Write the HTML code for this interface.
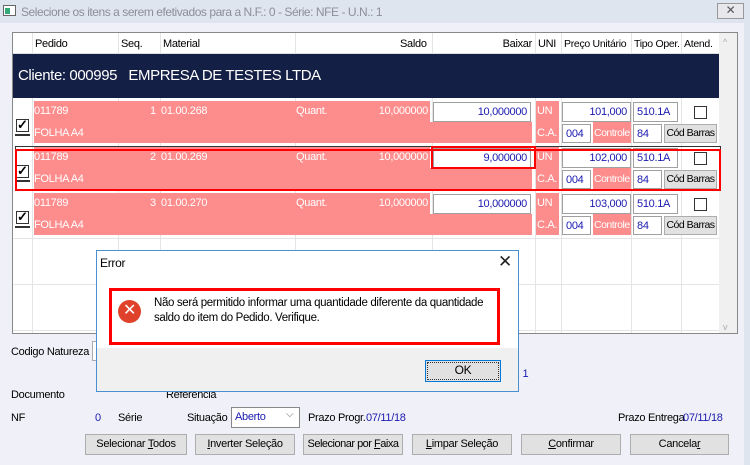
<!DOCTYPE html>
<html><head><meta charset="utf-8"><style>
*{margin:0;padding:0;box-sizing:border-box}
body{width:750px;height:465px;background:#f0f0f8;font-family:"Liberation Sans",sans-serif;font-size:11px;letter-spacing:-0.3px;color:#000;position:relative;overflow:hidden}
div{white-space:nowrap}
.a{position:absolute}
.pk{position:absolute;background:#fd8c8c}
.w{color:#fff}
.in{position:absolute;background:#fff;border:1px solid #a0a0a0;color:#1a1ab0;padding:2px 3px;line-height:14px}
.r{text-align:right}
.btn{position:absolute;background:#e1e1e1;border:1px solid #adadad;text-align:center;line-height:19px;height:21px;overflow:hidden}
.cb{position:absolute;width:13px;height:13px;border:1px solid #333;background:#fff}
.vl{position:absolute;width:1px;background:#e4e4e4}
.hl{position:absolute;height:1px;background:#e4e4e4}
.bl{color:#1a1ab0}
</style></head><body>
<div class="a" style="left:0;top:0;width:750px;height:23px;background:#dfe5ef"></div>
<div class="a" style="left:3px;top:5px;width:13px;height:11px;border:1px solid #666;background:#fff"><div style="position:absolute;left:1px;top:2px;width:5px;height:6px;background:#3a7"></div></div>
<div class="a" style="left:21px;top:5px;font-size:12px;color:#8a8f98;letter-spacing:-0.45px">Selecione os itens a serem efetivados para a N.F.: 0 - Série: NFE - U.N.: 1</div>
<div class="a" style="left:717px;top:3px;width:27px;height:16px;border:1px solid #999;background:#e8e8ec;text-align:center;line-height:13px;color:#555;font-size:12px">✕</div>
<div class="a" style="left:744px;top:23px;width:6px;height:442px;background:#dfe5ef"></div>

<div class="a" style="left:12px;top:32px;width:726px;height:302px;border:1px solid #888;background:#fff"></div>
<div class="a" style="left:719px;top:33px;width:18px;height:300px;background:#f0f0f0"></div>
<div class="a" style="left:723px;top:37px;color:#aaa;font-size:9px">^</div>
<div class="a" style="left:723px;top:322px;color:#aaa;font-size:9px">v</div>
<div class="hl" style="left:13px;top:53px;width:706px;background:#ddd"></div>
<div class="vl" style="left:32px;top:33px;height:300px"></div>
<div class="vl" style="left:118px;top:33px;height:300px"></div>
<div class="vl" style="left:160px;top:33px;height:300px"></div>
<div class="vl" style="left:295px;top:33px;height:300px"></div>
<div class="vl" style="left:432px;top:33px;height:300px"></div>
<div class="vl" style="left:535px;top:33px;height:300px"></div>
<div class="vl" style="left:561px;top:33px;height:300px"></div>
<div class="vl" style="left:631px;top:33px;height:300px"></div>
<div class="vl" style="left:681px;top:33px;height:300px"></div>
<div class="hl" style="left:13px;top:238px;width:706px"></div>
<div class="hl" style="left:13px;top:284px;width:706px"></div>
<div class="hl" style="left:13px;top:330px;width:706px"></div>
<div class="a" style="left:35px;top:38px">Pedido</div>
<div class="a" style="left:121px;top:38px">Seq.</div>
<div class="a" style="left:163px;top:38px">Material</div>
<div class="a" style="left:400px;top:38px">Saldo</div>
<div class="a" style="left:500px;top:38px;width:32px;text-align:right">Baixar</div>
<div class="a" style="left:538px;top:38px">UNI</div>
<div class="a" style="left:564px;top:38px;font-size:10.5px">Preço Unitário</div>
<div class="a" style="left:634px;top:38px;font-size:10.5px">Tipo Oper.</div>
<div class="a" style="left:684px;top:38px;font-size:10.5px">Atend.</div>
<div class="a" style="left:13px;top:54px;width:706px;height:44px;background:#141f45"></div>
<div class="a" style="left:18px;top:67px;color:#fff;font-size:15px;letter-spacing:-0.4px">Cliente: 000995 &nbsp;&nbsp;EMPRESA DE TESTES LTDA</div>

<div id="rows"></div>
<script>
var h='';[[101,'1','268','101,000','10,000000'],[147,'2','269','102,000','9,000000'],[193,'3','270','103,000','10,000000']].forEach(function(r){var y=r[0];
h+='<div class="pk" style="left:34px;top:'+y+'px;width:396px;height:21px"></div>';
h+='<div class="pk" style="left:34px;top:'+(y+21)+'px;width:498px;height:21px"></div>';
h+='<div class="pk" style="left:536px;top:'+y+'px;width:23px;height:21px"></div>';
h+='<div class="pk" style="left:536px;top:'+(y+21)+'px;width:23px;height:21px"></div>';
h+='<div class="pk" style="left:593px;top:'+(y+21)+'px;width:38px;height:21px"></div>';
h+='<div class="a w" style="left:34px;top:'+(y+4)+'px">011789</div>';
h+='<div class="a w" style="left:150px;top:'+(y+4)+'px">'+r[1]+'</div>';
h+='<div class="a w" style="left:161px;top:'+(y+4)+'px">01.00.'+r[2]+'</div>';
h+='<div class="a w" style="left:296px;top:'+(y+4)+'px">Quant.</div>';
h+='<div class="a w" style="left:370px;top:'+(y+4)+'px;width:58px;text-align:right">10,000000</div>';
h+='<div class="a w" style="left:34px;top:'+(y+26)+'px">FOLHA A4</div>';
h+='<div class="a w" style="left:537px;top:'+(y+4)+'px">UN</div>';
h+='<div class="a w" style="left:537px;top:'+(y+26)+'px">C.A.</div>';
h+='<div class="a w" style="left:594px;top:'+(y+26)+'px;font-size:10.5px;letter-spacing:-0.5px">Controle</div>';
h+='<div class="in r" style="left:433px;top:'+(y+1)+'px;width:98px;height:20px">'+r[4]+'</div>';
h+='<div class="in r" style="left:562px;top:'+(y+1)+'px;width:69px;height:20px">'+r[3]+'</div>';
h+='<div class="in" style="left:633px;top:'+(y+1)+'px;width:45px;height:20px">510.1A</div>';
h+='<div class="in" style="left:562px;top:'+(y+23)+'px;width:29px;height:19px">004</div>';
h+='<div class="in" style="left:633px;top:'+(y+23)+'px;width:29px;height:19px">84</div>';
h+='<div class="btn" style="left:664px;top:'+(y+23)+'px;width:53px;height:19px;line-height:17px;font-size:10.5px;letter-spacing:-0.5px">Cód Barras</div>';
h+='<div class="cb" style="left:694px;top:'+(y+5)+'px"></div>';
h+='<div class="cb" style="left:16px;top:'+(y+18)+'px;font-size:13px;line-height:10px;font-weight:bold">✓</div>';
h+='<div class="a" style="left:15px;top:'+(y+33)+'px;width:15px;height:2px;background:#333"></div>';
});document.getElementById('rows').innerHTML=h;
</script>
<div class="a" style="left:15px;top:146px;width:706px;height:44px;border:1px solid #333"></div>
<div class="a" style="left:15px;top:149px;width:706px;height:42px;border:2px solid #f00"></div>
<div class="a" style="left:431px;top:146px;width:105px;height:23px;border:2px solid #f00"></div>

<div class="a" style="left:11px;top:346px">Codigo Natureza</div>
<div class="a" style="left:92px;top:341px;width:6px;height:20px;border:1px solid #aaa;background:#fff"></div>
<div class="a bl" style="left:517px;top:368px">. 1</div>
<div class="a" style="left:11px;top:389px">Documento</div>
<div class="a" style="left:166px;top:389px">Referencia</div>
<div class="a" style="left:11px;top:412px">NF</div>
<div class="a bl" style="left:95px;top:412px">0</div>
<div class="a" style="left:118px;top:412px">Série</div>
<div class="a" style="left:187px;top:412px">Situação</div>
<div class="a" style="left:231px;top:407px;width:69px;height:21px;border:1px solid #888;background:#fff"></div>
<div class="a bl" style="left:235px;top:411px">Aberto</div>
<div class="a" style="left:286px;top:409px;color:#666;font-size:10px">⌵</div>
<div class="a" style="left:308px;top:412px">Prazo Progr.</div>
<div class="a bl" style="left:366px;top:412px">07/11/18</div>
<div class="a" style="left:618px;top:412px">Prazo Entrega</div>
<div class="a bl" style="left:683px;top:412px">07/11/18</div>
<div class="btn" style="left:85px;top:434px;width:102px">Selecionar <u>T</u>odos</div>
<div class="btn" style="left:195px;top:434px;width:100px"><u>I</u>nverter Seleção</div>
<div class="btn" style="left:303px;top:434px;width:100px;letter-spacing:-0.5px">Selecionar por <u>F</u>aixa</div>
<div class="btn" style="left:412px;top:434px;width:100px"><u>L</u>impar Seleção</div>
<div class="btn" style="left:521px;top:434px;width:100px"><u>C</u>onfirmar</div>
<div class="btn" style="left:630px;top:434px;width:99px">Cancela<u>r</u></div>

<div class="a" style="left:96px;top:250px;width:423px;height:142px;border:1px solid #4a90d0;background:#fff"></div>
<div class="a" style="left:97px;top:348px;width:421px;height:43px;background:#f0f0f0"></div>
<div class="a" style="left:100px;top:256px;font-size:12px">Error</div>
<div class="a" style="left:498px;top:252px;font-size:17px;color:#222">✕</div>
<div class="a" style="left:109px;top:288px;width:391px;height:57px;border:3px solid #f00"></div>
<div class="a" style="left:118px;top:300px;width:23px;height:23px;border-radius:50%;background:#e0412a;color:#fff;text-align:center;line-height:22px;font-size:16px">✕</div>
<div class="a" style="left:154px;top:296px;font-size:11.5px;letter-spacing:-0.35px;line-height:15px">Não será permitido informar uma quantidade diferente da quantidade<br>saldo do item do Pedido. Verifique.</div>
<div class="a" style="left:425px;top:360px;width:76px;height:22px;border:1px solid #0078d7;background:#e1e1e1;text-align:center;line-height:19px;font-size:12px"><div style="position:absolute;left:1px;top:1px;right:1px;bottom:1px;border:1px dotted #333"></div>OK</div>
</body></html>
